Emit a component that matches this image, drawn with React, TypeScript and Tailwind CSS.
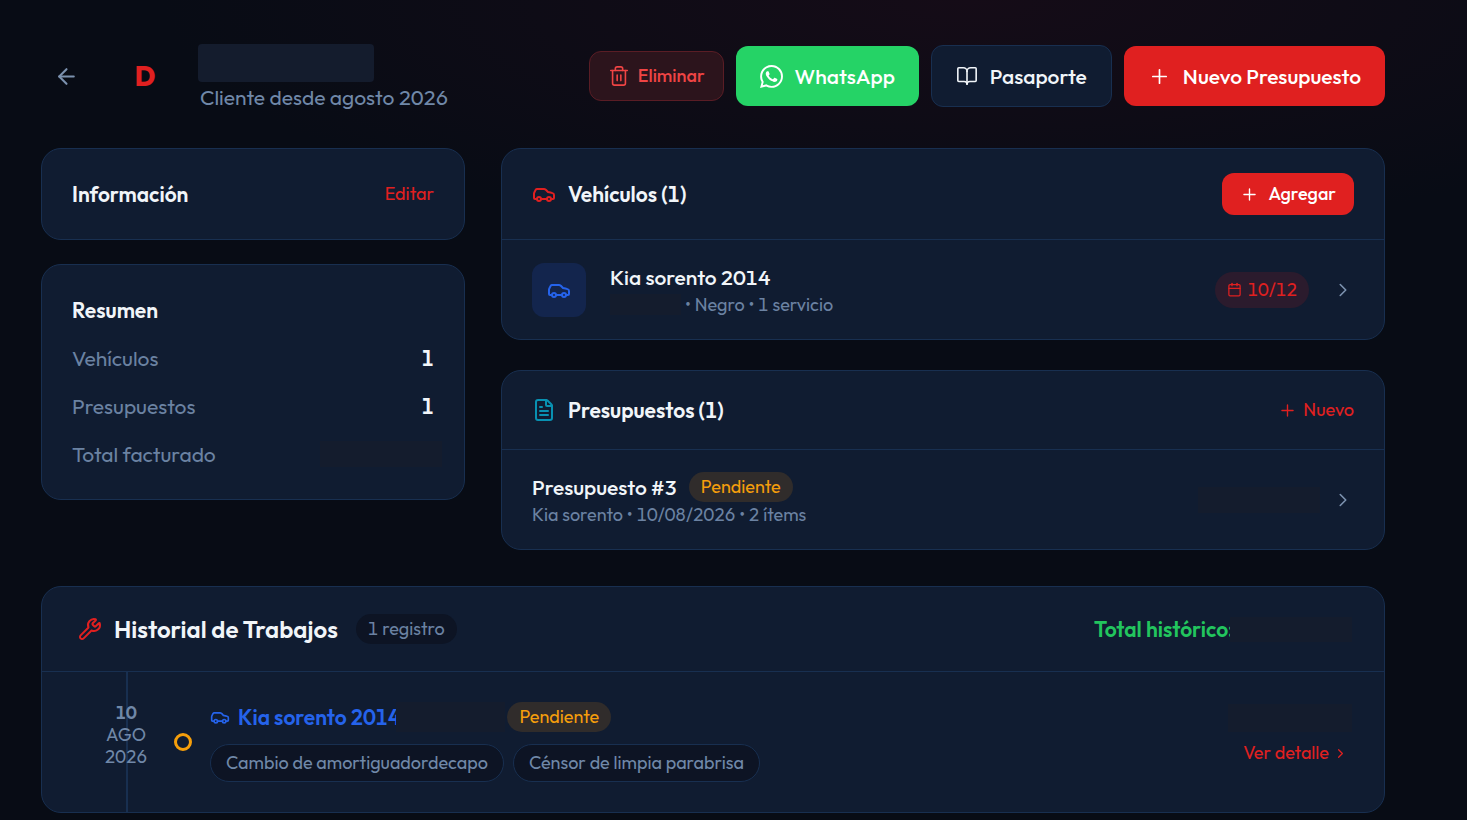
import type { ReactNode } from "react";
import {
  ArrowLeft,
  BookOpen,
  Calendar,
  Car,
  ChevronRight,
  FileText,
  Plus,
  Trash2,
  Wrench,
} from "lucide-react";
import { SiWhatsapp } from "react-icons/si";
import clsx from "clsx";

const summary = [
  { label: "Vehículos", value: "1" },
  { label: "Presupuestos", value: "1" },
  { label: "Total facturado", value: null },
];

const jobs = ["Cambio de amortiguadordecapo", "Cénsor de limpia parabrisa"];

function Card({
  className,
  children,
}: {
  className?: string;
  children: ReactNode;
}) {
  return (
    <section
      className={clsx(
        "rounded-[20px] border border-[#182f50] bg-[#101c31] overflow-hidden",
        className
      )}
    >
      {children}
    </section>
  );
}

// Placeholder for private values
function Hidden({ className }: { className?: string }) {
  return <span className={clsx("block bg-[#141c2d] shrink-0", className)} />;
}

function StatusBadge() {
  return (
    <span className="rounded-full bg-[#302c2b] px-3 text-[18px] leading-[30px] font-normal text-[#f59e0b]">
      Pendiente
    </span>
  );
}

export default function ClienteDetalle() {
  return (
    <div className="min-h-screen bg-[#080c15] bg-[radial-gradient(ellipse_55%_240px_at_66%_0px,#150c17,transparent)] pl-[41px] pr-[82px] pt-11 pb-1 font-[Outfit,Lato,sans-serif] text-[21px] leading-[30px] tabular-nums text-slate-100">
      <header className="flex items-center justify-between">
        <div className="flex items-center gap-[23px]">
          <button
            aria-label="Volver"
            className="flex h-[50px] w-[51px] items-center justify-center rounded-xl text-[#7b91ae]"
          >
            <ArrowLeft size={25} strokeWidth={2} />
          </button>
          <div className="flex w-[60px] justify-center text-[27px] font-extrabold text-[#e02020]">
            D
          </div>
          <div className="-mb-1">
            <Hidden className="h-[38px] w-44 rounded" />
            <p className="pl-0.5 text-[#7088a8]">Cliente desde agosto 2026</p>
          </div>
        </div>

        <div className="flex items-center gap-3">
          <button className="flex h-[50px] items-center gap-2 rounded-xl border border-[#5a1d25] bg-[#2c141c] px-[18px] text-[18px] font-medium text-[#ef4444]">
            <Trash2 size={22} strokeWidth={1.75} />
            Eliminar
          </button>
          <button className="flex h-[60px] items-center gap-3 rounded-xl bg-[#25d366] px-6 font-medium text-white">
            <SiWhatsapp size={23} />
            WhatsApp
          </button>
          <button className="flex h-[62px] items-center gap-3 rounded-xl border border-[#182f50] bg-[#101c31] px-6 font-medium">
            <BookOpen size={22} strokeWidth={1.75} />
            Pasaporte
          </button>
          <button className="flex h-[60px] items-center gap-3 rounded-xl bg-[#e02020] px-6 font-medium text-white">
            <Plus size={23} strokeWidth={1.75} />
            Nuevo Presupuesto
          </button>
        </div>
      </header>

      <main className="mt-10">
        <div className="grid grid-cols-3 items-start gap-9">
          <div className="space-y-6">
            <Card className="flex items-center justify-between p-[30px]">
              <h2 className="font-semibold">Información</h2>
              <button className="text-[18px] text-[#e02020]">Editar</button>
            </Card>

            <Card className="space-y-[18px] p-[30px]">
              <h2 className="font-semibold">Resumen</h2>
              {summary.map((item) => (
                <div
                  key={item.label}
                  className="flex items-center justify-between"
                >
                  <span className="text-[#6b82a2]">{item.label}</span>
                  {item.value ? (
                    <span className="font-semibold">{item.value}</span>
                  ) : (
                    <Hidden className="-mr-2 h-[26px] w-[122px]" />
                  )}
                </div>
              ))}
            </Card>
          </div>

          <div className="col-span-2 space-y-[30px]">
            <Card>
              <div className="flex items-center justify-between border-b border-[#182f50] px-[30px] py-6">
                <h2 className="flex items-center gap-3 font-semibold">
                  <Car size={24} className="text-[#e02020]" />
                  Vehículos (1)
                </h2>
                <button className="flex h-[42px] items-center gap-[9px] rounded-xl bg-[#e02020] px-[18px] text-[18px] font-medium text-white">
                  <Plus size={19} strokeWidth={1.75} />
                  Agregar
                </button>
              </div>
              <a
                href="#vehiculo"
                className="flex items-center px-[30px] py-[22px]"
              >
                <span className="flex h-[54px] w-[54px] items-center justify-center rounded-xl bg-[#13254d] text-[#2563eb]">
                  <Car size={24} />
                </span>
                <div className="ml-6 flex-1">
                  <p className="font-medium">Kia sorento 2014</p>
                  <p className="flex items-center gap-1 text-[18px] leading-[25px] text-[#6b82a2]">
                    <Hidden className="h-[21px] w-[71px]" />• Negro • 1 servicio
                  </p>
                </div>
                <span className="flex h-9 items-center gap-1.5 rounded-full bg-[#2b1b2d] px-3 text-[18px] text-[#e02020]">
                  <Calendar size={15} />
                  10/12
                </span>
                <ChevronRight
                  size={22}
                  strokeWidth={1.75}
                  className="ml-[23px] text-[#7b91ae]"
                />
              </a>
            </Card>

            <Card>
              <div className="flex items-center justify-between border-b border-[#182f50] px-[30px] py-6">
                <h2 className="flex items-center gap-3 font-semibold">
                  <FileText size={24} className="text-[#0891b2]" />
                  Presupuestos (1)
                </h2>
                <button className="flex items-center gap-1.5 text-[18px] text-[#e02020]">
                  <Plus size={19} strokeWidth={1.75} />
                  Nuevo
                </button>
              </div>
              <a
                href="#presupuesto"
                className="flex items-center px-[30px] py-[22px]"
              >
                <div className="flex-1">
                  <p className="flex items-center gap-3 font-medium">
                    Presupuesto #3
                    <StatusBadge />
                  </p>
                  <p className="text-[18px] leading-[25px] text-[#6b82a2]">
                    Kia sorento • 10/08/2026 • 2 ítems
                  </p>
                </div>
                <Hidden className="h-[26px] w-[122px]" />
                <ChevronRight
                  size={22}
                  strokeWidth={1.75}
                  className="ml-3 text-[#7b91ae]"
                />
              </a>
            </Card>
          </div>
        </div>

        <Card className="mt-9">
          <div className="flex items-center justify-between border-b border-[#182f50] py-6 pl-9 pr-8">
            <div className="flex items-center">
              <h2 className="flex items-center gap-3 text-[24px] leading-9 font-semibold">
                <Wrench size={24} className="text-[#e02020]" />
                Historial de Trabajos
              </h2>
              <span className="ml-[18px] rounded-full bg-[#0d1424] px-3 text-[18px] text-[#6b82a2]">
                1 registro
              </span>
            </div>
            <div className="flex items-center font-semibold text-[#22c55e]">
              Total histórico:
              <Hidden className="relative -ml-1 h-[25px] w-[122px]" />
            </div>
          </div>

          <div className="relative flex items-center py-[30px] pl-[54px] pr-8">
            <div className="absolute inset-y-0 left-[84px] w-0.5 bg-[#182f50]" />
            <div className="relative w-[60px] self-start text-center text-[18px] leading-[22px] text-[#7088a8]">
              <p className="font-semibold">10</p>
              <p>AGO</p>
              <p>2026</p>
            </div>
            <span className="ml-[18px] h-[18px] w-[18px] rounded-full border-3 border-[#f59e0b]" />
            <div className="ml-[18px] flex-1">
              <div className="flex items-center">
                <a
                  href="#vehiculo"
                  className="flex items-center gap-2 font-semibold text-[#2563eb]"
                >
                  <Car size={20} />
                  Kia sorento 2014
                </a>
                <Hidden className="relative -ml-1 mr-0.5 h-[30px] w-[109px]" />
                <StatusBadge />
              </div>
              <ul className="mt-3 flex gap-[9px] text-[18px] leading-9 text-[#7088a8]">
                {jobs.map((job) => (
                  <li
                    key={job}
                    className="rounded-full border border-[#182f50] bg-[#0d1424] px-[15px]"
                  >
                    {job}
                  </li>
                ))}
              </ul>
            </div>
            <div className="pb-3">
              <Hidden className="mb-1.5 h-[28px] w-[124px]" />
              <a
                href="#detalle"
                className="flex items-center justify-end gap-1 pr-1 text-[18px] text-[#e02020]"
              >
                Ver detalle
                <ChevronRight size={15} />
              </a>
            </div>
          </div>
        </Card>
      </main>
    </div>
  );
}
